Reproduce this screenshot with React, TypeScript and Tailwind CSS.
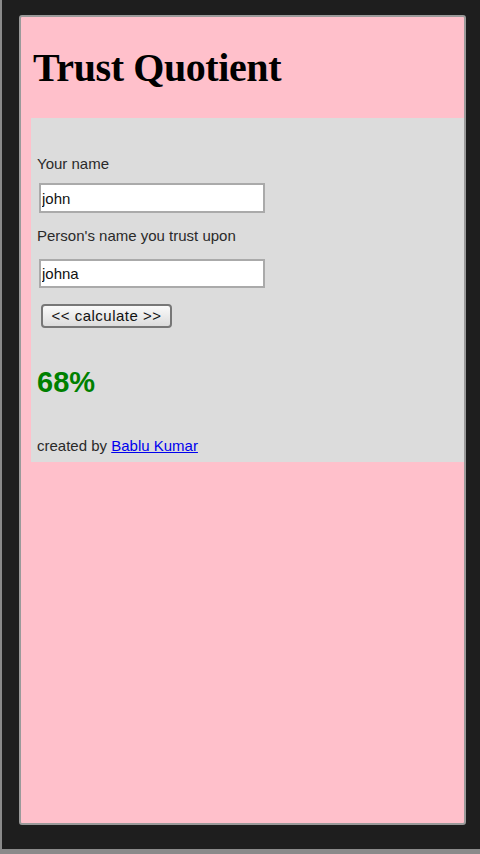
import React from "react";

export default function App() {
  return (
    <div className="w-[480px] h-[854px] bg-[#1e1e1e] border-l-2 border-b-[5px] border-[#8a8a8a] pl-[17px] pt-[15px] box-border">
      <div className="w-[447px] h-[810px] border-2 border-[#9a9a9a] rounded-[3px] bg-[#ffc0cb] flex flex-col box-border">
        <h1
          className="mt-[27px] pl-[12px] text-[40px] leading-[48px] font-bold tracking-[-0.4px] text-black"
          style={{ fontFamily: '"Liberation Serif", "Times New Roman", serif' }}
        >
          Trust Quotient
        </h1>
        <div
          className="mt-[26px] ml-[10px] h-[344px] bg-[#dcdcdc] pl-[6px] pt-[37px] flex flex-col items-start text-[15px] leading-[17px] text-[#2a2a2a]"
          style={{ fontFamily: '"Liberation Sans", Arial, sans-serif' }}
        >
          <label>Your name</label>
          <input
            defaultValue="john"
            className="mt-[11px] ml-[2px] w-[226px] h-[30px] border-2 border-[#aaaaaa] bg-white px-[1px] text-[15px] text-[#111] outline-none"
            style={{ fontFamily: '"Liberation Sans", Arial, sans-serif' }}
          />
          <label className="mt-[14px]">Person's name you trust upon</label>
          <input
            defaultValue="johna"
            className="mt-[15px] ml-[2px] w-[226px] h-[29px] border-2 border-[#aaaaaa] bg-white px-[1px] text-[15px] text-[#111] outline-none"
            style={{ fontFamily: '"Liberation Sans", Arial, sans-serif' }}
          />
          <button
            className="mt-[16px] ml-[4px] w-[131px] h-[24px] border-2 border-[#777] rounded-[4px] bg-gradient-to-b from-[#fafafa] to-[#dcdcdc] text-[15px] leading-[18px] tracking-[0.5px] text-[#111] flex items-center justify-center"
            style={{ fontFamily: '"Liberation Sans", Arial, sans-serif' }}
          >
            &lt;&lt; calculate &gt;&gt;
          </button>
          <div className="mt-[38px] text-[29px] leading-[33px] font-bold text-[#008000]">68%</div>
          <div className="mt-[38px] text-[15px] leading-[17px] text-[#2a2a2a]">
            created by{" "}
            <a href="#" className="text-[#0000ee] underline">
              Bablu Kumar
            </a>
          </div>
        </div>
      </div>
    </div>
  );
}
